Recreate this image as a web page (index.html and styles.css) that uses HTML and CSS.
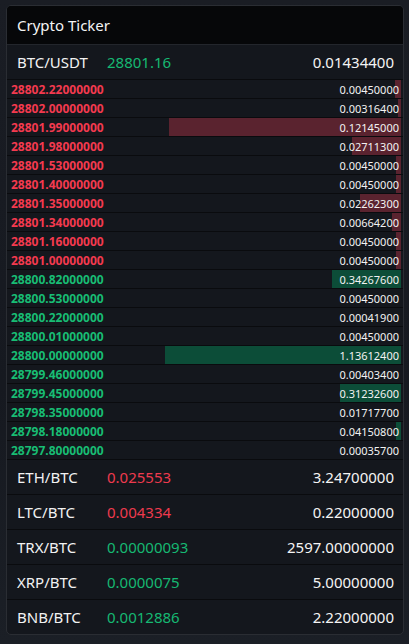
FILE: index.html
```html
<!DOCTYPE html>
<html lang="en">
<head>
<meta charset="utf-8">
<title>Crypto Ticker</title>
<link rel="stylesheet" href="styles.css">
</head>
<body>
<div class="card">
  <div class="card-header">Crypto Ticker</div>
  <div class="pair-row main">
    <span class="pair">BTC/USDT</span>
    <span class="price up">28801.16</span>
    <span class="vol">0.01434400</span>
  </div>
  <div class="book">
    <div class="ob-row ask"><span class="bar" style="width:6px"></span><span class="ob-price">28802.22000000</span><span class="ob-qty">0.00450000</span></div>
    <div class="ob-row ask"><span class="bar" style="width:3px"></span><span class="ob-price">28802.00000000</span><span class="ob-qty">0.00316400</span></div>
    <div class="ob-row ask"><span class="bar" style="width:232px"></span><span class="ob-price">28801.99000000</span><span class="ob-qty">0.12145000</span></div>
    <div class="ob-row ask"><span class="bar" style="width:49px"></span><span class="ob-price">28801.98000000</span><span class="ob-qty">0.02711300</span></div>
    <div class="ob-row ask"><span class="bar" style="width:5px"></span><span class="ob-price">28801.53000000</span><span class="ob-qty">0.00450000</span></div>
    <div class="ob-row ask"><span class="bar" style="width:5px"></span><span class="ob-price">28801.40000000</span><span class="ob-qty">0.00450000</span></div>
    <div class="ob-row ask"><span class="bar" style="width:41px"></span><span class="ob-price">28801.35000000</span><span class="ob-qty">0.02262300</span></div>
    <div class="ob-row ask"><span class="bar" style="width:9px"></span><span class="ob-price">28801.34000000</span><span class="ob-qty">0.00664200</span></div>
    <div class="ob-row ask"><span class="bar" style="width:5px"></span><span class="ob-price">28801.16000000</span><span class="ob-qty">0.00450000</span></div>
    <div class="ob-row ask"><span class="bar" style="width:5px"></span><span class="ob-price">28801.00000000</span><span class="ob-qty">0.00450000</span></div>
    <div class="ob-row bid"><span class="bar" style="width:69px"></span><span class="ob-price">28800.82000000</span><span class="ob-qty">0.34267600</span></div>
    <div class="ob-row bid"><span class="ob-price">28800.53000000</span><span class="ob-qty">0.00450000</span></div>
    <div class="ob-row bid"><span class="ob-price">28800.22000000</span><span class="ob-qty">0.00041900</span></div>
    <div class="ob-row bid"><span class="ob-price">28800.01000000</span><span class="ob-qty">0.00450000</span></div>
    <div class="ob-row bid"><span class="bar" style="width:236px"></span><span class="ob-price">28800.00000000</span><span class="ob-qty">1.13612400</span></div>
    <div class="ob-row bid"><span class="ob-price">28799.46000000</span><span class="ob-qty">0.00403400</span></div>
    <div class="ob-row bid"><span class="bar" style="width:61px"></span><span class="ob-price">28799.45000000</span><span class="ob-qty">0.31232600</span></div>
    <div class="ob-row bid"><span class="ob-price">28798.35000000</span><span class="ob-qty">0.01717700</span></div>
    <div class="ob-row bid"><span class="bar" style="width:5px"></span><span class="ob-price">28798.18000000</span><span class="ob-qty">0.04150800</span></div>
    <div class="ob-row bid"><span class="ob-price">28797.80000000</span><span class="ob-qty">0.00035700</span></div>
  </div>
  <div class="pair-row">
    <span class="pair">ETH/BTC</span>
    <span class="price down">0.025553</span>
    <span class="vol">3.24700000</span>
  </div>
  <div class="pair-row">
    <span class="pair">LTC/BTC</span>
    <span class="price down">0.004334</span>
    <span class="vol">0.22000000</span>
  </div>
  <div class="pair-row">
    <span class="pair">TRX/BTC</span>
    <span class="price up">0.00000093</span>
    <span class="vol">2597.00000000</span>
  </div>
  <div class="pair-row">
    <span class="pair">XRP/BTC</span>
    <span class="price up">0.0000075</span>
    <span class="vol">5.00000000</span>
  </div>
  <div class="pair-row last">
    <span class="pair">BNB/BTC</span>
    <span class="price up">0.0012886</span>
    <span class="vol">2.22000000</span>
  </div>
</div>
</body>
</html>
```

FILE: styles.css
```css
html, body {
  margin: 0;
  padding: 0;
}
body {
  background: linear-gradient(180deg, #1a1d24 0%, #161920 60%, #1b1f26 100%);
  min-height: 644px;
  font-family: "Noto Sans", "Open Sans", sans-serif;
  color: #f2f2f2;
  padding: 5px 5px 0 6px;
  box-sizing: border-box;
}
.card {
  width: 398px;
  box-sizing: border-box;
  border: 1px solid #2a2d33;
  border-radius: 5px;
  background: #14171d;
  overflow: hidden;
}
.card-header {
  height: 39px;
  box-sizing: border-box;
  background: #060709;
  border-bottom: 1px solid #23262c;
  padding: 0 10px;
  display: flex;
  align-items: center;
  font-size: 15px;
  color: #f4f4f4;
}
.pair-row {
  height: 35px;
  box-sizing: border-box;
  border-bottom: 1px solid #0a0b0e;
  display: grid;
  grid-template-columns: 90px 1fr auto;
  align-items: center;
  padding: 0 9px 0 10px;
  font-size: 15px;
}
.pair-row.last {
  height: 34px;
  border-bottom: none;
}
.price.up { color: #16b872; }
.price.down { color: #ee3a4e; }
.vol { text-align: right; color: #f4f4f4; }
.book {
  display: flex;
  flex-direction: column;
}
.ob-row {
  position: relative;
  height: 19px;
  box-sizing: border-box;
  border-bottom: 1px solid #0a0b0e;
  display: flex;
  justify-content: space-between;
  align-items: center;
  padding: 0 4px 0 4px;
  font-size: 12px;
}
.ob-row .bar {
  position: absolute;
  top: 0;
  bottom: 0;
  right: 2px;
}
.ask .bar { background: #5a232f; }
.bid .bar { background: #0c4d38; }
.ob-price {
  position: relative;
  font-weight: bold;
}
.ask .ob-price { color: #f43a4f; }
.bid .ob-price { color: #18bd74; }
.ob-qty {
  position: relative;
  font-size: 11px;
  color: #f2f2f2;
}
```
